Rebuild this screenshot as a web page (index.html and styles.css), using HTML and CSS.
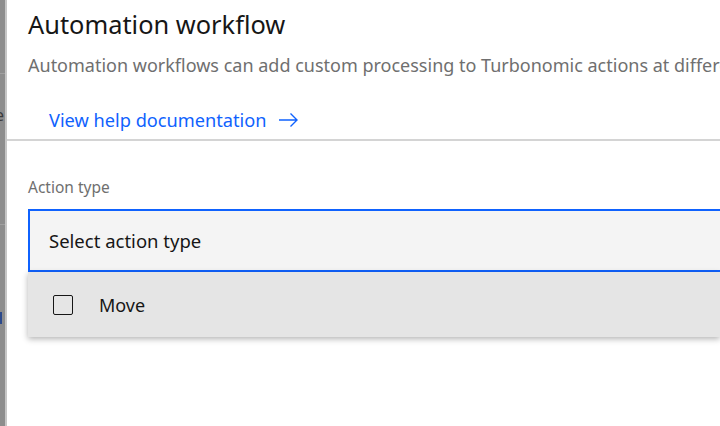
FILE: index.html
```html
<!DOCTYPE html>
<html lang="en">
<head>
    <meta charset="UTF-8">
    <meta name="viewport" content="width=device-width, initial-scale=1.0">
    <title>Automation workflow</title>
    <link rel="stylesheet" href="styles.css">
</head>
<body>
    <div class="backdrop">
        <div class="backdrop-line top"></div>
        <span class="backdrop-text">e</span>
        <div class="backdrop-line bottom"></div>
        <div class="backdrop-mark"></div>
    </div>

    <div class="panel">
        <div class="panel-header">
            <h1>Automation workflow</h1>
            <p class="subtitle">Automation workflows can add custom processing to Turbonomic actions at different stages of execution.</p>
            <a class="help-link" href="#">View help documentation
                <svg width="21" height="20" viewBox="0 0 21 20" fill="none" stroke="currentColor" stroke-width="1.4">
                    <path d="M1 10h18M12.5 3.5l6.5 6.5-6.5 6.5"/>
                </svg>
            </a>
        </div>

        <div class="form">
            <label class="field-label">Action type</label>
            <div class="select">Select action type</div>
            <ul class="menu">
                <li class="menu-item">
                    <span class="checkbox"></span>
                    <span>Move</span>
                </li>
            </ul>
        </div>
    </div>
</body>
</html>
```

FILE: styles.css
```css
html, body {
    margin: 0;
    height: 100%;
}
body {
    display: flex;
    font-family: "Noto Sans", Arial, sans-serif;
    color: #161616;
    background: #fff;
    overflow: hidden;
}
.backdrop {
    width: 5px;
    background-color: #8d8d8d;
    position: relative;
    overflow: hidden;
    flex-shrink: 0;
}
.backdrop-line {
    position: absolute;
    left: 0;
    width: 5px;
    height: 1px;
    background-color: #a0a0a0;
}
.backdrop-line.top {
    top: 73px;
}
.backdrop-line.bottom {
    top: 224px;
}
.backdrop-text {
    position: absolute;
    top: 104px;
    left: -5px;
    font-size: 16px;
    color: #3a3a3a;
}
.backdrop-mark {
    position: absolute;
    top: 312px;
    left: 0;
    width: 2px;
    height: 12px;
    background-color: #2c4a8c;
}
.panel {
    flex: 1;
    min-width: 0;
    border-left: 2px solid #c6c6c6;
    background-color: #fff;
}
.panel-header {
    padding: 6px 0 0 21px;
    border-bottom: 2px solid #d4d4d4;
    height: 141px;
    box-sizing: border-box;
}
h1 {
    margin: 0;
    font-size: 25.4px;
    font-weight: 400;
    line-height: 36px;
    color: #161616;
    white-space: nowrap;
}
.subtitle {
    margin: 11px 0 0;
    font-size: 18px;
    line-height: 24px;
    color: #6f6f6f;
    white-space: nowrap;
}
.help-link {
    display: inline-flex;
    align-items: center;
    gap: 11px;
    margin: 31px 0 0 21px;
    font-size: 18.2px;
    color: #0f62fe;
    text-decoration: none;
}
.form {
    padding: 36px 0 0 21px;
}
.field-label {
    display: block;
    font-size: 15.5px;
    line-height: 20px;
    color: #6f6f6f;
    margin-bottom: 12px;
}
.select {
    height: 59px;
    border: 2px solid #0f62fe;
    border-right: none;
    background-color: #f4f4f4;
    padding-left: 19px;
    display: flex;
    align-items: center;
    font-size: 18.5px;
}
.menu {
    list-style: none;
    margin: 0;
    padding: 0;
    background-color: #e5e5e5;
    box-shadow: 0 2px 6px rgba(0, 0, 0, 0.3);
}
.menu-item {
    height: 65px;
    display: flex;
    align-items: center;
    padding-left: 25px;
    gap: 26px;
    font-size: 18px;
}
.checkbox {
    width: 18px;
    height: 18px;
    border: 1.5px solid #161616;
    border-radius: 2px;
}
```
